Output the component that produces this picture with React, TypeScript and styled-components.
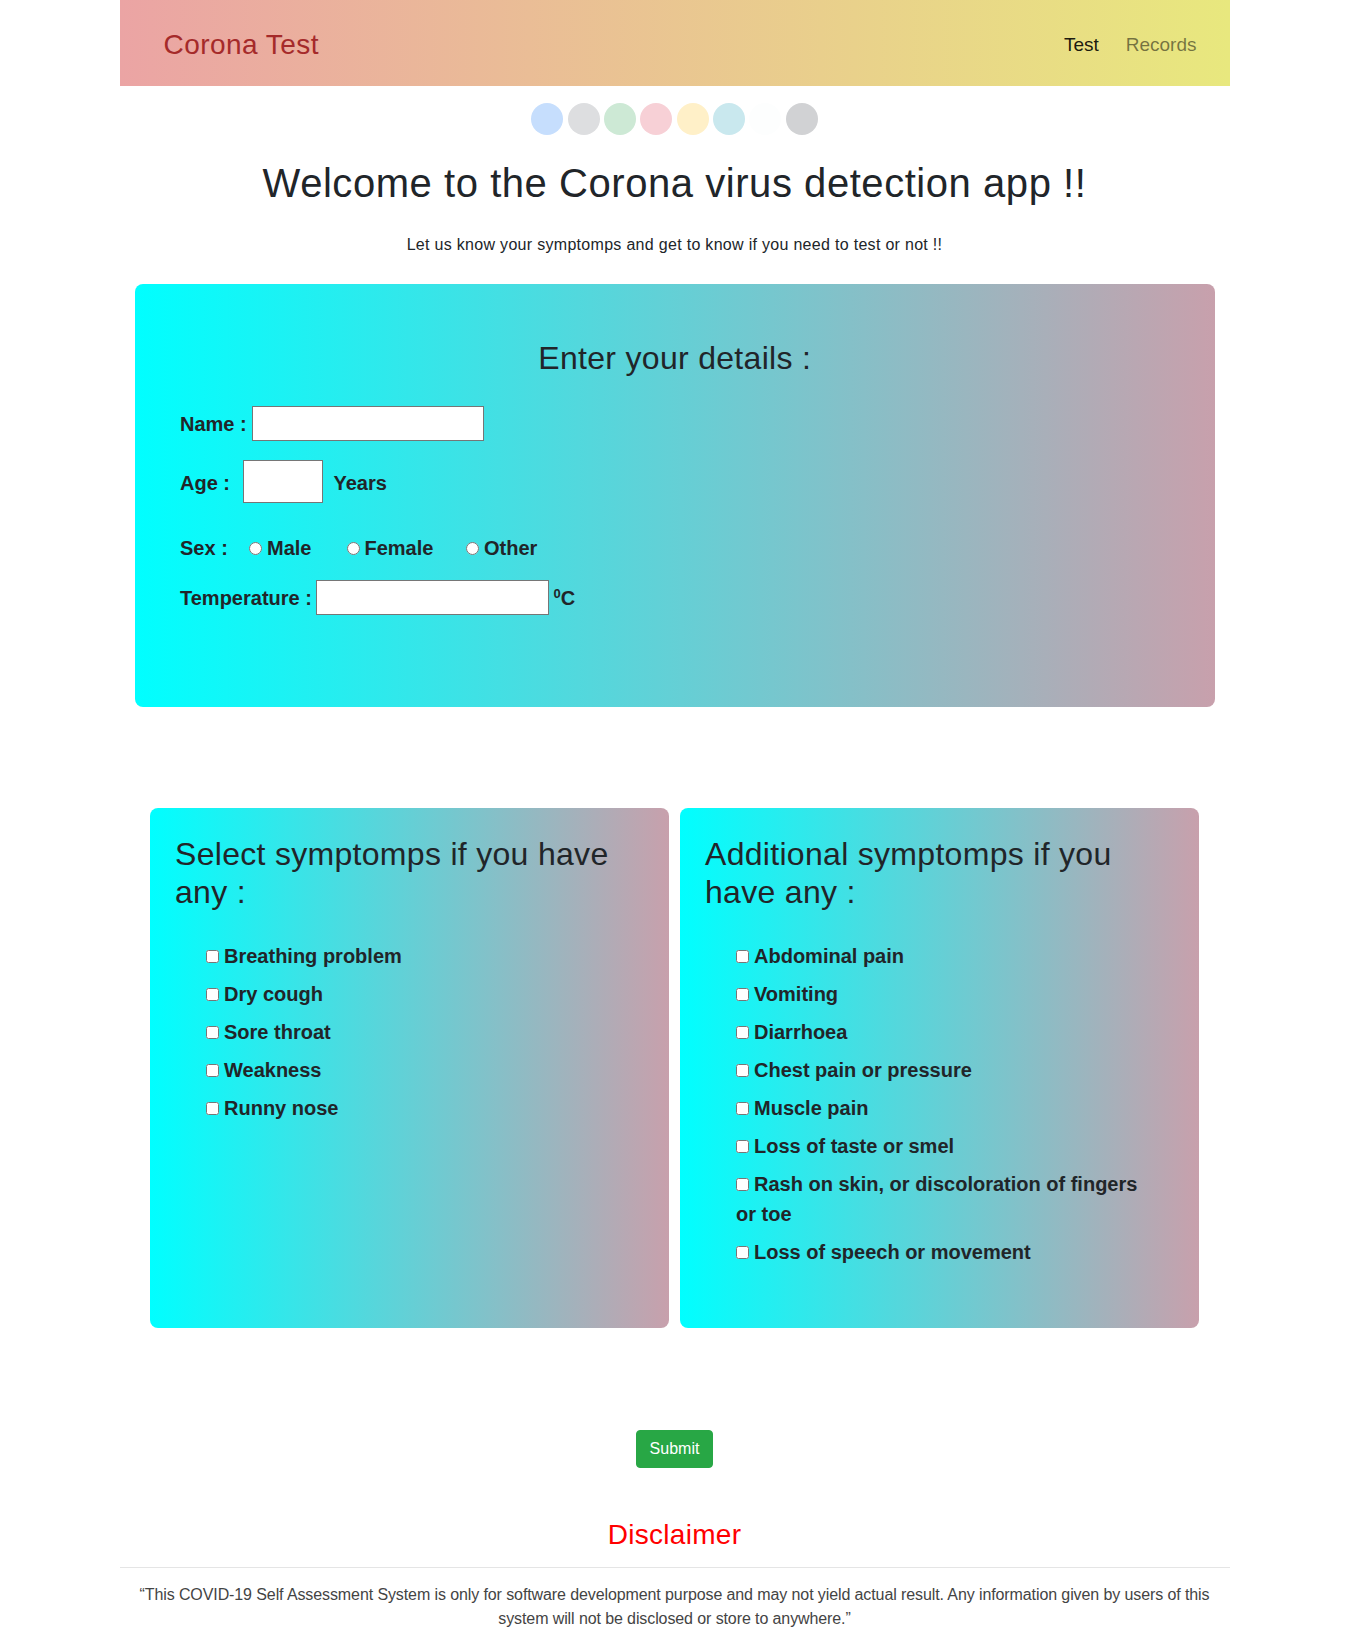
import React from "react";
import styled, { createGlobalStyle } from "styled-components";

const FONT = `"Liberation Sans", Arial, sans-serif`;
const CARD_BG = "linear-gradient(to right, #00ffff 0%, #c8a0ac 100%)";

const GlobalStyle = createGlobalStyle`
  *, *::before, *::after { box-sizing: border-box; }
  html, body { margin: 0; padding: 0; background: #ffffff; }
  body {
    font-family: ${FONT};
    color: #212529;
    font-size: 16px;
    line-height: 1.5;
  }
`;

const Page = styled.div`
  width: 1110px;
  margin: 0 auto;
  padding-bottom: 8px;
`;

const Navbar = styled.nav`
  height: 86px;
  display: flex;
  align-items: center;
  justify-content: space-between;
  padding: 3px 33px 0 44px;
  background: linear-gradient(to right, #eba4a4, #e8e87e);
`;

const Brand = styled.a`
  font-size: 28px;
  line-height: 1;
  color: #a52a2a;
  text-decoration: none;
  letter-spacing: 0.45px;
`;

const NavList = styled.div`
  display: flex;
  gap: 27px;
`;

const NavLink = styled.a<{ $active?: boolean }>`
  font-size: 19px;
  line-height: 1;
  text-decoration: none;
  color: ${(p) => (p.$active ? "rgba(0,0,0,0.9)" : "rgba(0,0,0,0.5)")};
`;

const Dots = styled.div`
  display: flex;
  justify-content: center;
  gap: 4.3px;
  margin-top: 17px;
`;

const Dot = styled.span<{ $c: string }>`
  width: 32px;
  height: 32px;
  border-radius: 50%;
  background: ${(p) => p.$c};
`;

const Title = styled.h1`
  margin: 24px 0 0;
  font-size: 40px;
  font-weight: 400;
  line-height: 48px;
  letter-spacing: 0.55px;
  text-align: center;
`;

const Subtitle = styled.p`
  margin: 26px 0 0;
  font-size: 16px;
  font-weight: 400;
  line-height: 24px;
  letter-spacing: 0.3px;
  text-align: center;
`;

const DetailsCard = styled.section`
  margin: 27px 15px 0;
  height: 423px;
  border-radius: 8px;
  background: ${CARD_BG};
  padding: 55px 45px 0 45.5px;
`;

const CardTitle = styled.h2`
  margin: 0;
  font-size: 32px;
  font-weight: 400;
  line-height: 38px;
  letter-spacing: 0.3px;
  text-align: center;
`;

const FormRow = styled.div<{ $mt: number; $h: number }>`
  display: flex;
  align-items: center;
  margin-top: ${(p) => p.$mt}px;
  height: ${(p) => p.$h}px;
  font-size: 20px;
  font-weight: 700;
`;

const FieldLabel = styled.label<{ $w: number }>`
  width: ${(p) => p.$w}px;
  flex: none;
  white-space: nowrap;
  padding-top: 2px;
`;

const TextInput = styled.input<{ $w: number; $h: number }>`
  width: ${(p) => p.$w}px;
  height: ${(p) => p.$h}px;
  margin: 0;
  padding: 1px 4px;
  border: 1px solid #767676;
  border-radius: 0;
  background: #ffffff;
  font-family: ${FONT};
  font-size: 16px;
`;

const Unit = styled.span<{ $ml: number }>`
  margin-left: ${(p) => p.$ml}px;
  padding-top: 2px;
  white-space: nowrap;
`;

const Sup = styled.sup`
  font-size: 13px;
  vertical-align: 7px;
  line-height: 0;
`;

const RadioOption = styled.label<{ $w?: number }>`
  display: inline-flex;
  align-items: center;
  gap: 5px;
  padding-top: 2px;
  ${(p) => (p.$w ? `width: ${p.$w}px;` : "")}
  flex: none;
`;

const Radio = styled.input`
  width: 13px;
  height: 13px;
  margin: 0;
`;

const SymptomGrid = styled.div`
  display: grid;
  grid-template-columns: 1fr 1fr;
  gap: 10.5px;
  margin: 101px 30.5px 0 30px;
`;

const SymptomCard = styled.section`
  height: 520px;
  border-radius: 8px;
  background: ${CARD_BG};
  padding: 27px 25px 0 25.5px;
`;

const SymptomTitle = styled.h2`
  margin: 0;
  font-size: 32px;
  font-weight: 400;
  line-height: 38.4px;
  letter-spacing: 0.3px;
`;

const SymptomList = styled.ul`
  list-style: none;
  margin: 29px 0 0;
  padding: 0 26px 0 31px;
`;

const SymptomItem = styled.li`
  font-size: 20px;
  font-weight: 700;
  line-height: 30px;
  margin-bottom: 8px;
`;

const Check = styled.input`
  width: 13px;
  height: 13px;
  margin: 0 5px 1px 0;
  vertical-align: baseline;
`;

const Actions = styled.div`
  display: flex;
  justify-content: center;
  margin-top: 102px;
`;

const SubmitButton = styled.button`
  font-family: ${FONT};
  font-size: 16px;
  line-height: 24px;
  padding: 6px 13px;
  color: #ffffff;
  background: #28a745;
  border: 1px solid #28a745;
  border-radius: 4px;
  cursor: pointer;
`;

const DisclaimerTitle = styled.h3`
  margin: 50px 0 0;
  font-size: 28px;
  font-weight: 400;
  line-height: 33.6px;
  letter-spacing: 0.3px;
  color: #ff0000;
  text-align: center;
`;

const Rule = styled.hr`
  margin: 15px 0 0;
  border: 0;
  border-top: 1px solid rgba(0, 0, 0, 0.1);
`;

const DisclaimerText = styled.p`
  margin: 15.5px 0 0;
  font-size: 16px;
  line-height: 24px;
  letter-spacing: -0.1px;
  color: #444444;
  text-align: center;
`;

const dotColors = [
  "#c6defd",
  "#dddee0",
  "#cde9d5",
  "#f7d0d6",
  "#fff0c8",
  "#c9e8ee",
  "#fdfefe",
  "#d1d2d4",
];

const mainSymptoms = [
  "Breathing problem",
  "Dry cough",
  "Sore throat",
  "Weakness",
  "Runny nose",
];

const additionalSymptoms = [
  "Abdominal pain",
  "Vomiting",
  "Diarrhoea",
  "Chest pain or pressure",
  "Muscle pain",
  "Loss of taste or smel",
  "Rash on skin, or discoloration of fingers or toe",
  "Loss of speech or movement",
];

export default function App() {
  return (
    <>
      <GlobalStyle />
      <Page>
        <Navbar>
          <Brand href="#">Corona Test</Brand>
          <NavList>
            <NavLink href="#" $active>
              Test
            </NavLink>
            <NavLink href="#">Records</NavLink>
          </NavList>
        </Navbar>

        <Dots>
          {dotColors.map((c, i) => (
            <Dot key={i} $c={c} />
          ))}
        </Dots>

        <Title>Welcome to the Corona virus detection app !!</Title>
        <Subtitle>
          Let us know your symptomps and get to know if you need to test or not !!
        </Subtitle>

        <DetailsCard>
          <CardTitle>Enter your details :</CardTitle>
          <FormRow $mt={28.5} $h={35.5}>
            <FieldLabel $w={72}>Name :</FieldLabel>
            <TextInput type="text" $w={232} $h={35.5} />
          </FormRow>
          <FormRow $mt={19} $h={43}>
            <FieldLabel $w={63}>Age :</FieldLabel>
            <TextInput type="text" $w={80} $h={43} />
            <Unit $ml={10.5}>Years</Unit>
          </FormRow>
          <FormRow $mt={29} $h={30}>
            <FieldLabel $w={69}>Sex :</FieldLabel>
            <RadioOption $w={97.5}>
              <Radio type="radio" name="sex" />
              Male
            </RadioOption>
            <RadioOption $w={119.5}>
              <Radio type="radio" name="sex" />
              Female
            </RadioOption>
            <RadioOption>
              <Radio type="radio" name="sex" />
              Other
            </RadioOption>
          </FormRow>
          <FormRow $mt={18} $h={34.6}>
            <FieldLabel $w={136}>Temperature :</FieldLabel>
            <TextInput type="text" $w={232.5} $h={34.6} />
            <Unit $ml={5}>
              <Sup>0</Sup>C
            </Unit>
          </FormRow>
        </DetailsCard>

        <SymptomGrid>
          <SymptomCard>
            <SymptomTitle>Select symptomps if you have any :</SymptomTitle>
            <SymptomList>
              {mainSymptoms.map((s) => (
                <SymptomItem key={s}>
                  <Check type="checkbox" />
                  {s}
                </SymptomItem>
              ))}
            </SymptomList>
          </SymptomCard>
          <SymptomCard>
            <SymptomTitle>Additional symptomps if you have any :</SymptomTitle>
            <SymptomList>
              {additionalSymptoms.map((s) => (
                <SymptomItem key={s}>
                  <Check type="checkbox" />
                  {s}
                </SymptomItem>
              ))}
            </SymptomList>
          </SymptomCard>
        </SymptomGrid>

        <Actions>
          <SubmitButton type="button">Submit</SubmitButton>
        </Actions>

        <DisclaimerTitle>Disclaimer</DisclaimerTitle>
        <Rule />
        <DisclaimerText>
          “This COVID-19 Self Assessment System is only for software development purpose and may
          not yield actual result. Any information given by users of this system will not be
          disclosed or store to anywhere.”
        </DisclaimerText>
      </Page>
    </>
  );
}
